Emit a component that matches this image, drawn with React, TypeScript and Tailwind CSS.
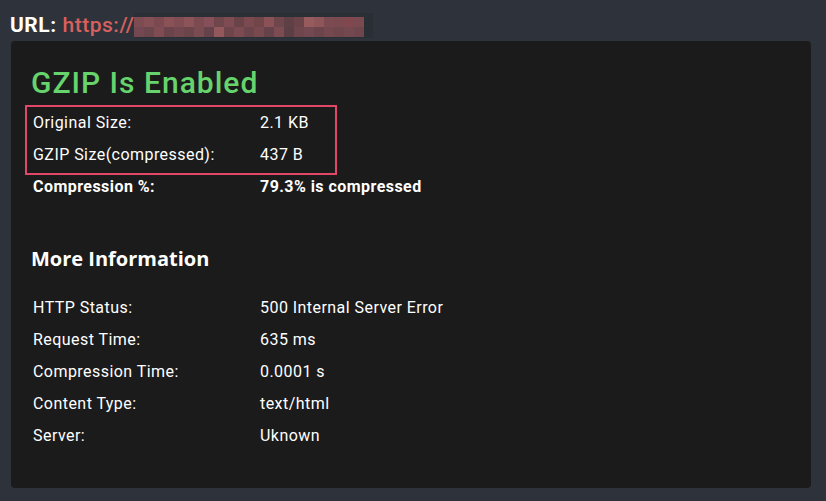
const blur = [
  ['#7d4c52', '#844f55', '#7a4a50', '#8a5257', '#7f4d53', '#8c5358', '#7b4b51', '#86505a', '#6f464c', '#7e4c52', '#6a4349', '#7a4a50', '#704649', '#8a5257', '#6e464b', '#5f4046', '#6a4449', '#975b5d', '#8f5659', '#7c4b51', '#7a4a50', '#80484e', '#7a4a50'],
  ['#744850', '#6d454c', '#7e4c52', '#6a444a', '#734750', '#6c454b', '#7a4b51', '#66434a', '#92585b', '#6e454b', '#7c4b51', '#6b454b', '#784a50', '#66434a', '#7d4c52', '#5c3f45', '#6f464c', '#744850', '#6b454b', '#754850', '#6e464c', '#744850', '#6f464c'],
]

const mainRows = [
  { label: 'Original Size:', value: '2.1 KB' },
  { label: 'GZIP Size(compressed):', value: '437 B' },
]

const infoRows = [
  { label: 'HTTP Status:', value: '500 Internal Server Error' },
  { label: 'Request Time:', value: '635 ms' },
  { label: 'Compression Time:', value: '0.0001 s' },
  { label: 'Content Type:', value: 'text/html' },
  { label: 'Server:', value: 'Uknown' },
]

function Row({ label, value, bold }: { label: string; value: string; bold?: boolean }) {
  return (
    <div className={`flex h-8 items-center text-[16px] leading-8 tracking-[0.45px] text-white ${bold ? 'font-bold' : ''}`}>
      <span className="w-[227px] shrink-0">{label}</span>
      <span>{value}</span>
    </div>
  )
}

export default function App() {
  return (
    <div className="min-h-screen w-full bg-[#2e333b] px-[11px] pt-[11px] font-['Roboto',sans-serif]">
      {/* URL header */}
      <div className="flex items-center text-[21px] leading-[28px] tracking-[0.5px]">
        <span className="-ml-[1px] font-bold text-white">URL:</span>
        <span className="ml-[6px] font-medium text-[#d9605e]">https://</span>
        <div className="relative h-[25px] w-[239px] bg-[#2a2e35]">
          <div className="flex h-[21px] flex-col pt-[4px]">
            {blur.map((line, i) => (
              <div key={i} className="flex h-[10px]">
                {line.map((c, j) => (
                  <div key={j} className="h-[10px] w-[10px]" style={{ background: c }} />
                ))}
              </div>
            ))}
          </div>
        </div>
      </div>

      {/* Result card */}
      <div className="mt-[2px] h-[447px] w-[800px] rounded-[4px] bg-[#1b1b1c] pl-[22px] pt-6">
        <h1 className="-ml-[2px] text-[30px] font-medium leading-[36px] tracking-[1px] text-[#66d36c]">GZIP Is Enabled</h1>

        <div className="relative mt-[6px]">
          {mainRows.map((r) => (
            <Row key={r.label} label={r.label} value={r.value} />
          ))}
          <Row label="Compression %:" value="79.3% is compressed" bold />
          {/* highlight annotation */}
          <div className="pointer-events-none absolute -left-[8px] -top-[2px] h-[70px] w-[312px] border-2 border-[#e2476a]" />
        </div>

        <h2 className="-ml-[2px] mt-[42px] font-['Open_Sans',sans-serif] text-[20px] font-bold leading-[28px] text-white">
          More Information
        </h2>

        <div className="mt-[19px]">
          {infoRows.map((r) => (
            <Row key={r.label} label={r.label} value={r.value} />
          ))}
        </div>
      </div>
    </div>
  )
}
